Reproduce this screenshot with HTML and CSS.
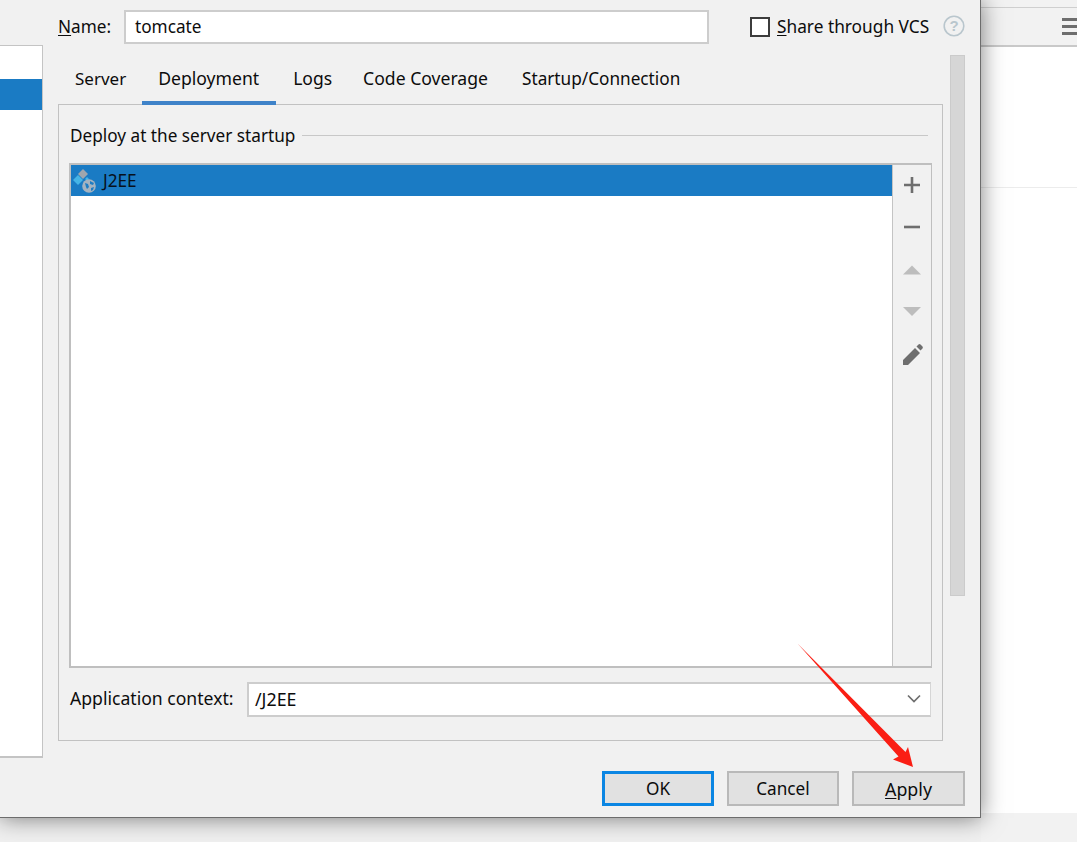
FILE: index.html
```html
<!DOCTYPE html>
<html lang="en">
<head>
<meta charset="utf-8">
<title>Run/Debug Configurations</title>
<link rel="stylesheet" href="styles.css">
</head>
<body>
<div class="screen">
  <main class="dialog">
    <aside class="tree"><div class="tree-sel"></div></aside>
    <section class="content">
      <div class="name-row">
        <label class="name-label"><u>N</u>ame:</label>
        <div class="field name-field">tomcate</div>
        <div class="share">
          <span class="checkbox"></span>
          <span class="share-text"><u>S</u>hare through VCS</span>
          <svg class="help" viewBox="0 0 22 22" width="22" height="22"><circle cx="11" cy="11" r="9.8" fill="none" stroke="#b9c6cd" stroke-width="1.6"/><text x="11" y="16" text-anchor="middle" class="help-q">?</text></svg>
        </div>
      </div>
      <div class="middle">
        <div class="main-col">
          <nav class="tabs">
            <span class="tab tab-server">Server</span>
            <span class="tab tab-active">Deployment</span>
            <span class="tab tab-logs">Logs</span>
            <span class="tab tab-coverage">Code Coverage</span>
            <span class="tab tab-last">Startup/Connection</span>
          </nav>
          <div class="panel">
            <div class="legend"><span>Deploy at the server startup</span><i class="legend-line"></i></div>
            <div class="listbox">
              <div class="list">
                <div class="row">
                  <svg class="artifact" viewBox="0 0 26 26" width="26" height="26">
                    <path d="M11 1l5 5-5 5-5-5z" fill="#9fa6ad"/>
                    <path d="M6 7l5 5-5 5-5-5z" fill="#45b4e6"/>
                    <path d="M15 9l2 2-2 2-2-2z" fill="#45b4e6"/>
                    <circle cx="17" cy="18" r="6.8" fill="#a5b3c0"/>
                    <path d="M13 15l3 1 1 3-2 2-1-2zM18 13l4 2-1 2-3-1zM19 20l3-1-1 3-2 1z" fill="#1f7dc4"/>
                  </svg>
                  <span>J2EE</span>
                </div>
              </div>
              <div class="tools">
                <svg viewBox="0 0 20 20" width="20" height="20"><path d="M2 8.700h16v2.600H2zM8.700 2h2.600v16H8.700z" fill="#6e6e6e"/></svg>
                <svg viewBox="0 0 20 20" width="20" height="20"><path d="M2 8.700h16v2.600H2z" fill="#6e6e6e"/></svg>
                <svg viewBox="0 0 20 20" width="20" height="20"><path d="M10 6.500l9 9H1z" fill="#bdbdbd"/></svg>
                <svg viewBox="0 0 20 20" width="20" height="20"><path d="M1 6h18l-9 9z" fill="#bdbdbd"/></svg>
                <svg class="tool-pen" viewBox="0 0 24 24" width="24" height="24"><path d="M3 23v-5L15 6l5 5L8 23zM16.500 4.500l2-2q1-.8 2 0l2 2q.8 1 0 2l-2 2z" fill="#6e6e6e"/></svg>
              </div>
            </div>
            <div class="context">
              <label class="context-label">Application context:</label>
              <div class="field context-field"><span>/J2EE</span>
                <svg viewBox="0 0 14 10" width="14" height="10"><path d="M1 1.500l6 6 6-6" fill="none" stroke="#6e6e6e" stroke-width="1.700"/></svg>
              </div>
            </div>
          </div>
        </div>
        <div class="scroll"></div>
      </div>
      <footer class="buttons">
        <button class="btn btn-default" type="button">OK</button>
        <button class="btn btn-cancel" type="button">Cancel</button>
        <button class="btn btn-apply" type="button"><u>A</u>pply</button>
      </footer>
    </section>
  </main>
  <div class="side">
    <div class="side-top">
      <div class="side-strip"></div>
      <div class="side-bar">
        <div class="burger"><i></i><i></i><i></i></div>
      </div>
    </div>
    <div class="side-block"></div>
    <div class="side-fill"></div>
  </div>
  <div class="under"></div>
  <svg class="arrow" viewBox="0 0 1077 842" width="1077" height="842"><path d="M797.500 643.500L905.500 752 908 747 913 767 893 759.500 898.500 756.500z" fill="#fa1e14"/></svg>
</div>
</body>
</html>
```
FILE: styles.css
```css
* { box-sizing: border-box; }
html, body { margin: 0; height: 100%; overflow: hidden; }
body { font-family: "Noto Sans", "Open Sans", sans-serif; font-size: 17.2px; color: #0c0c0c; background: #fff; }
u { text-underline-offset: 2px; }
.screen { position: relative; width: 1077px; height: 842px; display: grid; grid-template-columns: 981px 96px; grid-template-rows: 818px 24px; overflow: hidden; }
.dialog { grid-column: 1; grid-row: 1; position: relative; z-index: 2; background: #f1f1f1; border-right: 1px solid #6d6d6d; border-bottom: 1px solid #6d6d6d; box-shadow: 0 0 22px rgba(0,0,0,.5); display: grid; grid-template-columns: 43px 1fr; }
.tree { margin-top: 45px; height: 713px; background: #fff; border: 1px solid #c4c4c4; border-left: 0; border-bottom-width: 2px; padding-top: 33px; }
.tree-sel { height: 31px; background: #1a7bc4; }
.content { padding-left: 15px; display: flex; flex-direction: column; }
.name-row { display: flex; align-items: center; height: 34px; margin-top: 10px; }
.name-label { width: 66px; padding-bottom: 1px; }
.field { background: #fff; border: 2px solid #cdcdcd; border-right-width: 1px; }
.name-field { width: 585px; height: 34px; display: flex; align-items: center; padding: 0 0 1px 9px; border-right-width: 2px; }
.share { display: flex; align-items: center; margin-left: 41px; }
.checkbox { width: 20px; height: 20px; border: 2px solid #3c3c3c; background: #fff; }
.share-text { margin-left: 7px; padding-bottom: 2px; font-size: 17.3px; }
.help { margin-left: 14px; margin-top: -2px; }
.help-q { font-size: 15px; font-weight: 700; fill: #b9c6cd; font-family: "Liberation Sans", sans-serif; }
.middle { display: flex; align-items: flex-start; margin-top: 11px; }
.main-col { width: 885px; }
.tabs { height: 50px; display: flex; padding-left: 1px; position: relative; z-index: 1; }
.tab { padding: 11px 16px 0; height: 50px; margin-right: 1px; font-size: 17.5px; }
.tab-server { font-size: 17px; padding-top: 12px; margin-right: 0; }
.tab-active { border-bottom: 4px solid #3f83c9; font-size: 17.6px; padding-right: 17px; }
.tab-logs { padding-right: 14px; }
.tab-coverage { margin-right: 2px; font-size: 17.6px; }
.tab-last { font-size: 17.2px; padding-top: 12px; }
.panel { height: 637px; border: 1px solid #c2c2c2; margin-top: -1px; padding: 0 10px; }
.legend { display: flex; align-items: center; height: 24px; margin-top: 18px; padding-left: 1px; }
.legend-line { flex: 1; height: 1px; background: #c8c8c8; margin: 0 4px 0 7px; }
.listbox { display: flex; height: 505px; margin-top: 16px; border: 1px solid #bfbfbf; border-width: 2px 1px 2px 2px; }
.list { flex: 1; background: #fff; }
.row { height: 31px; background: #1a7bc4; display: flex; align-items: center; padding-left: 1px; gap: 5px; color: #07111c; }
.artifact { flex: none; }
.tools { width: 39px; border-left: 1px solid #c4c4c4; display: flex; flex-direction: column; align-items: center; padding-top: 10px; gap: 22px; }
.tools svg { flex: none; }
.tool-pen { margin-top: -1px; }
.context { display: flex; align-items: center; margin-top: 14px; padding-left: 1px; }
.context-label { width: 177px; font-size: 17.6px; padding-bottom: 3px; }
.context-field { width: 684px; height: 35px; display: flex; align-items: center; justify-content: space-between; padding: 0 9px 2px 6px; border-right-color: #d6d6d6; font-size: 17.8px; }
.scroll { width: 15px; height: 541px; margin-left: 7px; background: #d6d6d6; border: 1px solid #cbcbcb; }
.buttons { display: flex; justify-content: flex-end; gap: 13px; margin-top: auto; margin-bottom: 11px; padding-right: 15px; }
.btn { width: 113px; height: 35px; background: #e1e1e1; border: 2px solid #b9b9b9; font: inherit; color: inherit; padding: 0; }
.btn-cancel { width: 112px; }
.btn-apply { font-size: 17.8px; }
.btn-default { width: 112px; border: 3px solid #0b86e3; }
.side { grid-column: 2; grid-row: 1 / 3; display: flex; flex-direction: column; background: #fff; }
.side-top { height: 47px; background: #f2f2f2; border-bottom: 2px solid #c9c9c9; }
.side-strip { height: 8px; border-bottom: 1px solid #cfcfcf; }
.side-bar { height: 37px; display: flex; justify-content: flex-end; padding-top: 10px; }
.burger { width: 15px; display: flex; flex-direction: column; gap: 4px; }
.burger i { height: 3px; background: #6e6e6e; }
.side-block { height: 141px; border-bottom: 1px solid #ececec; }
.side-fill { flex: 1; border-bottom: 29px solid #f2f2f2; }
.under { grid-column: 1; grid-row: 2; background: #f0f0f0; }
.arrow { position: absolute; left: 0; top: 0; z-index: 3; pointer-events: none; }
```
